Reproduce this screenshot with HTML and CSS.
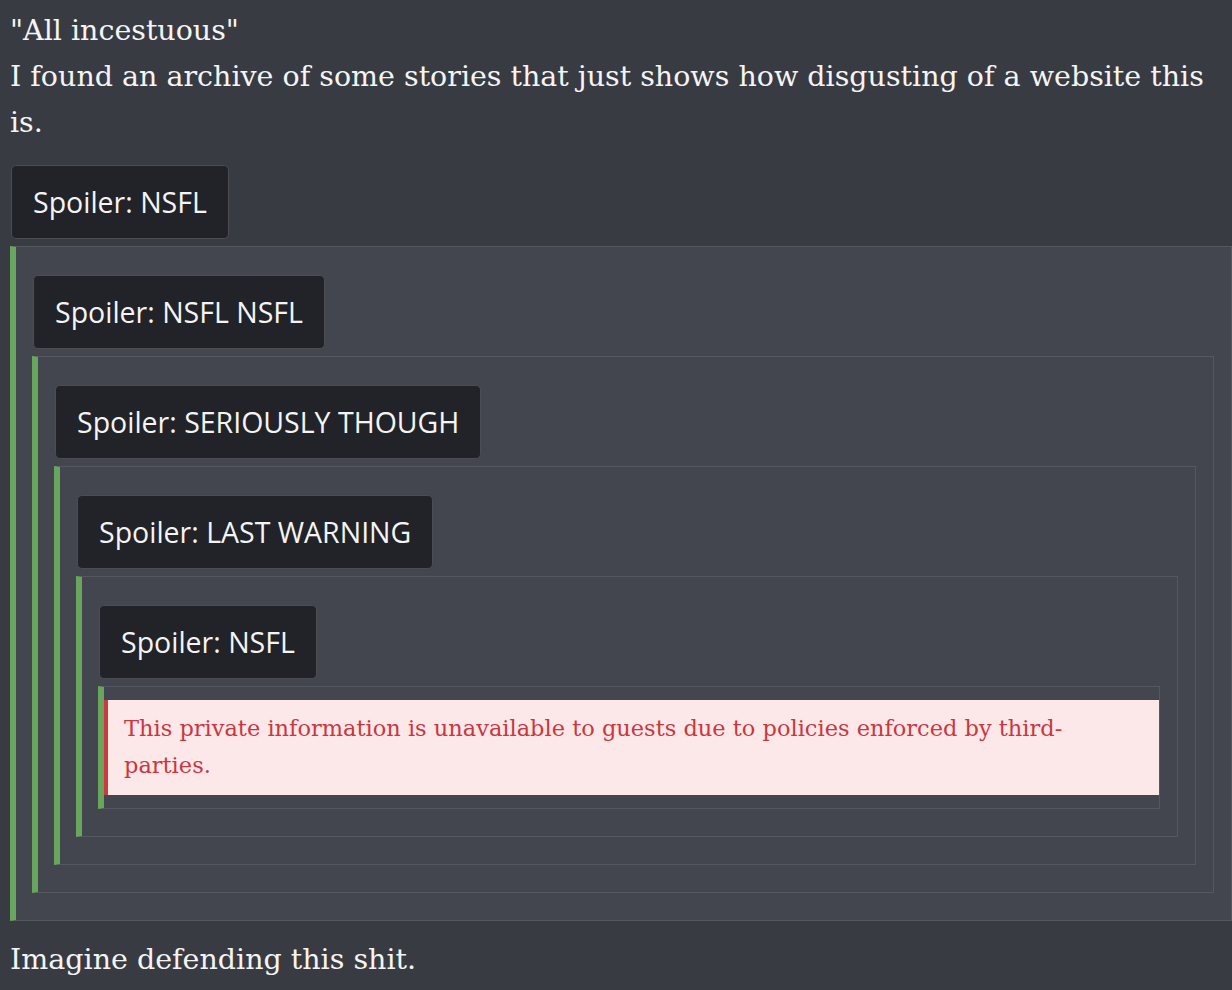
FILE: index.html
```html
<!DOCTYPE html>
<html lang="en">
<head>
    <meta charset="UTF-8">
    <title>Post</title>
    <link rel="stylesheet" href="styles.css">
</head>
<body>
    <div class="post">
        <p class="post-text">"All incestuous"<br>I found an archive of some stories that just shows how disgusting of a website this is.</p>

        <div class="spoiler spoiler-top">
            <button type="button" class="spoiler-btn">Spoiler: NSFL</button>
            <div class="spoiler-body">
                <div class="spoiler">
                    <button type="button" class="spoiler-btn">Spoiler: NSFL NSFL</button>
                    <div class="spoiler-body">
                        <div class="spoiler">
                            <button type="button" class="spoiler-btn">Spoiler: SERIOUSLY THOUGH</button>
                            <div class="spoiler-body">
                                <div class="spoiler">
                                    <button type="button" class="spoiler-btn">Spoiler: LAST WARNING</button>
                                    <div class="spoiler-body">
                                        <div class="spoiler">
                                            <button type="button" class="spoiler-btn">Spoiler: NSFL</button>
                                            <div class="spoiler-body spoiler-last">
                                                <div class="blocked">This private information is unavailable to guests due to policies enforced by third-parties.</div>
                                            </div>
                                        </div>
                                    </div>
                                </div>
                            </div>
                        </div>
                    </div>
                </div>
            </div>
        </div>

        <p class="post-text">Imagine defending this shit.</p>
    </div>
</body>
</html>
```

FILE: styles.css
```css
body { margin: 0; padding: 8px 0 0 10px; background: #393b43; color: #f4f4f4; font-family: "DejaVu Serif", serif; }
.post-text { margin: 0; font-size: 28.5px; line-height: 46px; }
.spoiler-top { margin: 19px 0 16px; }
.spoiler-btn {
    display: block;
    font-family: "Open Sans", sans-serif;
    font-size: 28.5px;
    line-height: 40px;
    color: #f4f4f4;
    background: #212328;
    border: 1px solid #4b4d53;
    border-radius: 5px;
    padding: 16px 21px;
    margin: 0 0 0 1px;
}
.spoiler-body {
    margin-top: 7px;
    background: #43464e;
    border: 1px solid #55585f;
    border-left: 6px solid #67a65c;
    padding: 28px 17px 27px 16px;
}
.spoiler-last { padding: 0; }
.blocked {
    margin: 13px 0;
    background: #fde8e9;
    border-left: 4px solid #cc3a3f;
    color: #c9373f;
    font-size: 22.5px;
    line-height: 37px;
    padding: 10px 16px 11px;
}
```
